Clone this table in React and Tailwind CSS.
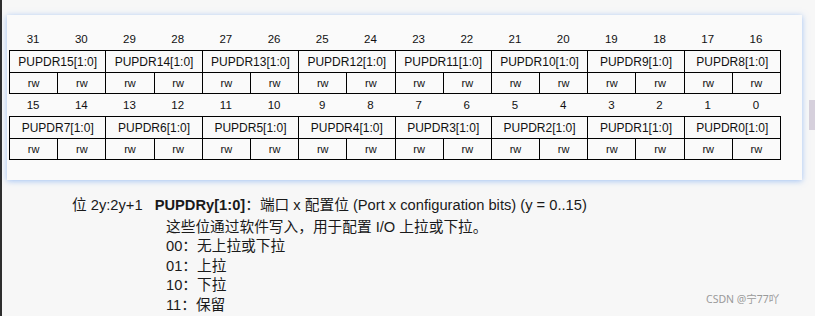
const fields = (from) => Array.from({ length: 8 }, (_, i) => from - i)

function RegisterGroup({ top, numberRow }) {
    const bits = Array.from({ length: 16 }, (_, i) => top * 2 + 1 - i)
    return (
        <div>
            <div className={`grid grid-cols-16 w-[771px] text-[11.5px] text-[#111] ${numberRow}`}>
                {bits.map((b) => (
                    <span key={b} className="text-center">{b}</span>
                ))}
            </div>
            <table className="table-fixed w-[772px] border-collapse text-[#111]">
                <tbody>
                    <tr className="h-[22px] text-[12px]">
                        {fields(top).map((n) => (
                            <td key={n} colSpan={2} className="border border-black text-center p-0">PUPDR{n}[1:0]</td>
                        ))}
                    </tr>
                    <tr className="h-[21px] text-[11px]">
                        {Array.from({ length: 16 }, (_, i) => (
                            <td key={i} className="border border-black text-center p-0">rw</td>
                        ))}
                    </tr>
                </tbody>
            </table>
        </div>
    )
}

export default function App() {
    return (
        <div className="relative w-[815px] h-[316px] overflow-hidden bg-[#f7f7f7] flex font-['Liberation_Sans','Noto_Sans_CJK_SC',sans-serif]">
            <div className="w-[2px] h-full bg-[#2e2e2e]" />

            <div className="flex flex-col pt-[15px] pl-[5px]">
                <div className="w-[795px] h-[165px] bg-[#fafafa] shadow-[0_1px_6px_rgba(90,150,240,0.55)] pl-[2px] pt-[17px]">
                    <RegisterGroup top={15} numberRow="h-[18px] leading-[14px]" />
                    <RegisterGroup top={7} numberRow="h-[22px] leading-[22px]" />
                </div>

                <div className="mt-[15px] pl-[65px] text-[14.7px] leading-[20px] text-[#1a1a1a]">
                    <p>
                        位 2y:2y+1<span className="ml-[12px] font-bold">PUPDRy[1:0]</span>：端口 x 配置位 (Port x configuration bits) (y = 0..15)
                    </p>
                    <div className="pl-[94px] mt-[3px] leading-[19.4px]">
                        <p>这些位通过软件写入，用于配置 I/O 上拉或下拉。</p>
                        <p>00：无上拉或下拉</p>
                        <p>01：上拉</p>
                        <p>10：下拉</p>
                        <p>11：保留</p>
                    </div>
                </div>
            </div>

            <div className="absolute right-0 top-[100px] w-[6px] h-[30px] bg-[#d6d0dc]" />
            <span className="absolute left-[706px] top-[292px] text-[10.5px] text-[#9a9a9a] font-['Noto_Sans','Noto_Sans_CJK_SC',sans-serif]">CSDN @宁77吖</span>
        </div>
    )
}
